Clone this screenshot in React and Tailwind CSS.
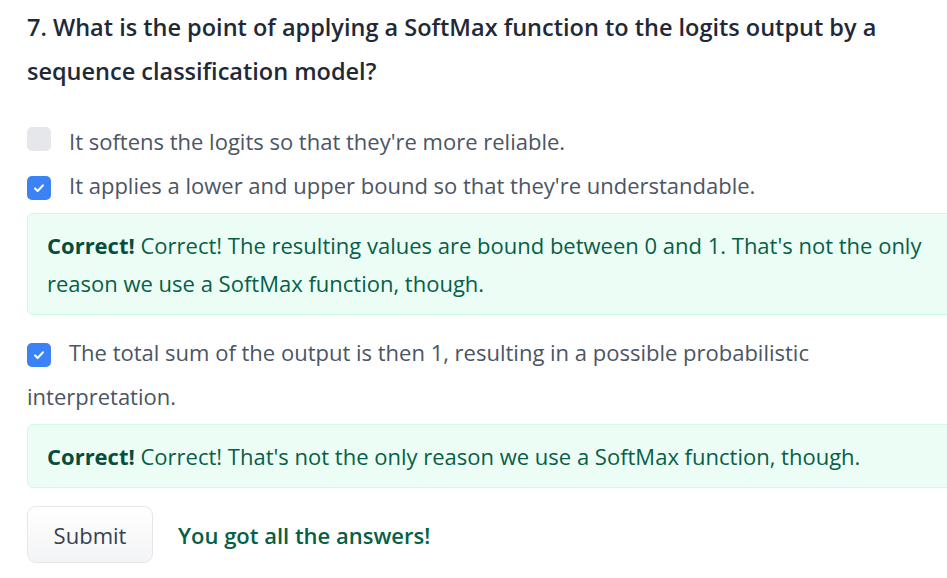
import { useState } from "react";

const options = [
    { id: 1, text: "It softens the logits so that they're more reliable.", checked: false },
    {
        id: 2,
        text: "It applies a lower and upper bound so that they're understandable.",
        checked: true,
        feedback: "Correct! The resulting values are bound between 0 and 1. That's not the only reason we use a SoftMax function, though.",
    },
    {
        id: 3,
        text: "The total sum of the output is then 1, resulting in a possible probabilistic interpretation.",
        checked: true,
        feedback: "Correct! That's not the only reason we use a SoftMax function, though.",
    },
];

function Check({ checked, onClick }) {
    return (
        <button
            onClick={onClick}
            className={
                checked
                    ? "inline-flex items-center justify-center w-6 h-6 rounded-[5px] bg-[#3b82f6] align-[-1px] mr-[18px]"
                    : "inline-flex items-center justify-center w-6 h-6 rounded-[5px] bg-[#e5e7eb] align-[-1px] mr-[18px]"
            }
        >
            {checked && (
                <svg viewBox="0 0 16 16" className="w-[14px] h-[14px]" fill="none">
                    <path d="M3.5 8.5l3 3 6-6.5" stroke="white" strokeWidth="2.4" strokeLinecap="round" strokeLinejoin="round" />
                </svg>
            )}
        </button>
    );
}

function App() {
    const [checked, setChecked] = useState(options.map((o) => o.checked));

    const toggle = (i) => setChecked((prev) => prev.map((c, j) => (j === i ? !c : c)));

    return (
        <div
            className="w-[930px] ml-[27px] pt-[5px] text-[22px] leading-[44px] text-[#4b5563]"
            style={{ fontFamily: "'Open Sans', sans-serif" }}
        >
            <h3 className="font-semibold text-[23.5px] text-[#1f2937] mb-[26px]">
                7. What is the point of applying a SoftMax function to the logits output by a sequence classification model?
            </h3>

            <div className="flex flex-col">
                {options.map((o, i) => (
                    <div key={o.id}>
                        <label className="block">
                            <Check checked={checked[i]} onClick={() => toggle(i)} />
                            {o.text}
                        </label>
                        {o.feedback && (
                            <div className="mt-[6px] mb-[15px] px-[19px] py-[12px] rounded-[6px] border border-[#d1fae5] bg-[#ecfdf5] text-[#065f46] leading-[38px]">
                                <span className="font-bold text-[#064e3b]">Correct!</span> {o.feedback}
                            </div>
                        )}
                    </div>
                ))}
            </div>

            <div className="flex items-center gap-[25px] mt-[3px]">
                <button className="h-[57px] w-[126px] rounded-[9px] border border-[#e5e7eb] bg-gradient-to-b from-white to-[#f3f4f6] text-[#374151] leading-none">
                    Submit
                </button>
                <span className="font-semibold text-[#065f46]">You got all the answers!</span>
            </div>
        </div>
    );
}

export default App;
